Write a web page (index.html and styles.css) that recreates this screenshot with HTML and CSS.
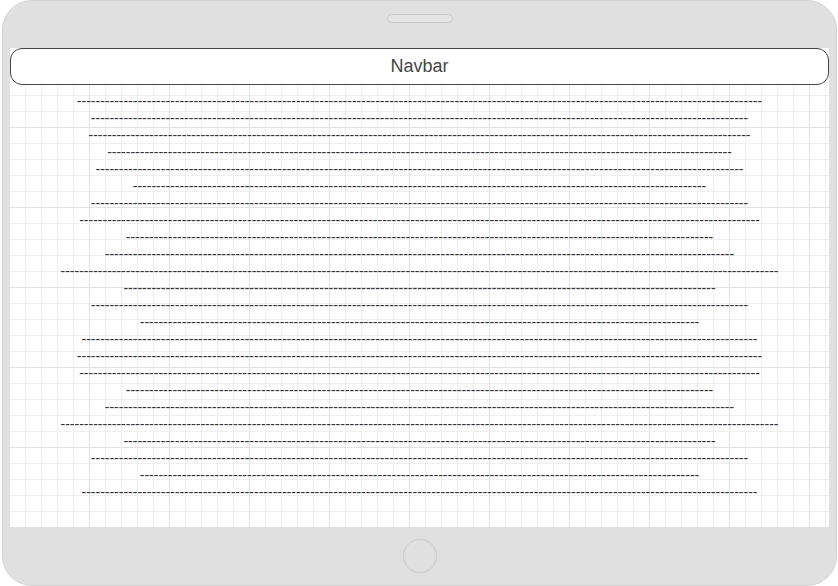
FILE: index.html
```html
<!DOCTYPE html>
<html lang="en">
<head>
<meta charset="utf-8">
<title>Tablet mockup</title>
<link rel="stylesheet" href="styles.css">
</head>
<body>
<div class="device">
  <div class="device-top"><div class="camera"></div></div>
  <div class="screen">
    <div class="navbar">Navbar</div>
    <div class="content">
      <div class="line">---------------------------------------------------------------------------------------------------------------------------------------------------</div>
      <div class="line">---------------------------------------------------------------------------------------------------------------------------------------------</div>
      <div class="line">----------------------------------------------------------------------------------------------------------------------------------------------</div>
      <div class="line">--------------------------------------------------------------------------------------------------------------------------------------</div>
      <div class="line">-------------------------------------------------------------------------------------------------------------------------------------------</div>
      <div class="line">---------------------------------------------------------------------------------------------------------------------------</div>
      <div class="line">---------------------------------------------------------------------------------------------------------------------------------------------</div>
      <div class="line">--------------------------------------------------------------------------------------------------------------------------------------------------</div>
      <div class="line">------------------------------------------------------------------------------------------------------------------------------</div>
      <div class="line">---------------------------------------------------------------------------------------------------------------------------------------</div>
      <div class="line">----------------------------------------------------------------------------------------------------------------------------------------------------------</div>
      <div class="line">-------------------------------------------------------------------------------------------------------------------------------</div>
      <div class="line">---------------------------------------------------------------------------------------------------------------------------------------------</div>
      <div class="line">------------------------------------------------------------------------------------------------------------------------</div>
      <div class="line">-------------------------------------------------------------------------------------------------------------------------------------------------</div>
      <div class="line">---------------------------------------------------------------------------------------------------------------------------------------------------</div>
      <div class="line">--------------------------------------------------------------------------------------------------------------------------------------------------</div>
      <div class="line">------------------------------------------------------------------------------------------------------------------------------</div>
      <div class="line">---------------------------------------------------------------------------------------------------------------------------------------</div>
      <div class="line">----------------------------------------------------------------------------------------------------------------------------------------------------------</div>
      <div class="line">-------------------------------------------------------------------------------------------------------------------------------</div>
      <div class="line">---------------------------------------------------------------------------------------------------------------------------------------------</div>
      <div class="line">------------------------------------------------------------------------------------------------------------------------</div>
      <div class="line">-------------------------------------------------------------------------------------------------------------------------------------------------</div>
    </div>
  </div>
  <div class="device-bottom"><div class="home-button"></div></div>
</div>
</body>
</html>
```

FILE: styles.css
```css
html, body {
  margin: 0;
  padding: 0;
}

body {
  background: #ffffff;
  font-family: "Liberation Sans", Arial, sans-serif;
}

.device {
  box-sizing: border-box;
  width: 835px;
  height: 586px;
  margin-left: 2px;
  padding: 0 7px;
  background: #e0e0e0;
  border: 1px solid #d2d2d2;
  border-radius: 30px;
  display: flex;
  flex-direction: column;
}

.device-top {
  height: 47px;
  display: flex;
  justify-content: center;
  align-items: flex-start;
}

.camera {
  box-sizing: border-box;
  margin-top: 13px;
  width: 66px;
  height: 9px;
  border: 1px solid #c9c9c9;
  border-radius: 5px;
  background: #e4e4e4;
}

.screen {
  height: 479px;
  background-color: #ffffff;
  background-image:
    linear-gradient(to right, #e2e2e2 1px, transparent 1px),
    linear-gradient(to bottom, #e2e2e2 1px, transparent 1px),
    linear-gradient(to right, #efefef 1px, transparent 1px),
    linear-gradient(to bottom, #efefef 1px, transparent 1px);
  background-size: 80px 80px, 80px 80px, 16px 16px, 16px 16px;
  background-position: -1px -1px, -1px -1px, -1px -1px, -1px -1px;
}

.navbar {
  box-sizing: border-box;
  height: 37px;
  border: 1px solid #444444;
  border-radius: 12px;
  background: #ffffff;
  display: flex;
  align-items: center;
  justify-content: center;
  font-size: 18px;
  color: #444444;
}

.content {
  padding-top: 8px;
  text-align: center;
  font-size: 14px;
  line-height: 17px;
  color: #333333;
  white-space: nowrap;
}

.device-bottom {
  flex: 1;
  display: flex;
  align-items: center;
  justify-content: center;
}

.home-button {
  box-sizing: border-box;
  width: 34px;
  height: 34px;
  border: 1px solid #cacaca;
  border-radius: 50%;
}
```
